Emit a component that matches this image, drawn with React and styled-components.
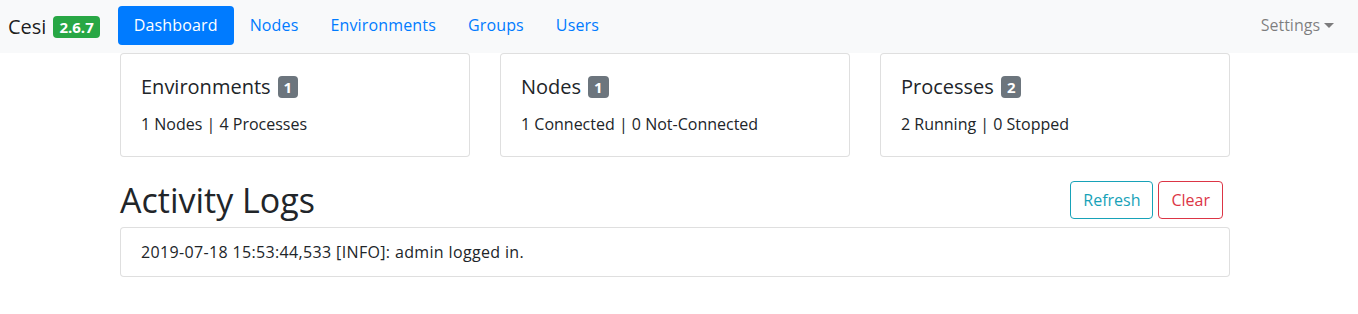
import styled, { createGlobalStyle } from "styled-components";

const GlobalStyle = createGlobalStyle`
  * { box-sizing: border-box; }
  body {
    margin: 0;
    background: #fff;
    color: #212529;
    font-family: "Open Sans", "Noto Sans", sans-serif;
    font-size: 16px;
    line-height: 1.5;
  }
`;

const Navbar = styled.nav`
  display: flex;
  align-items: center;
  height: 53px;
  padding: 0 8px;
  background: #f8f9fa;
`;

const Brand = styled.a`
  display: flex;
  align-items: center;
  font-size: 20px;
  color: rgba(0, 0, 0, 0.9);
  margin-right: 18px;
`;

const Badge = styled.span`
  display: inline-block;
  padding: 0 6px;
  margin-left: 7px;
  font-size: 15px;
  font-weight: 700;
  line-height: 22px;
  color: #fff;
  background: ${(p) => p.bg || "#6c757d"};
  border-radius: 4px;
`;

const NavList = styled.ul`
  display: flex;
  list-style: none;
  margin: 0;
  padding: 0;
  flex: 1;
`;

const NavLink = styled.a`
  display: block;
  padding: 7px 16px 8px;
  border-radius: 4px;
  color: ${(p) => (p.active ? "#fff" : "#007bff")};
  background: ${(p) => (p.active ? "#007bff" : "transparent")};
  text-decoration: none;
  margin-top: -2px;
  letter-spacing: 0.15px;
`;

const Dropdown = styled.a`
  display: flex;
  align-items: center;
  padding: 8px 16px;
  color: rgba(0, 0, 0, 0.5);
  margin-top: -3px;
  &::after {
    content: "";
    margin-left: 4px;
    border-top: 5px solid currentColor;
    border-left: 5px solid transparent;
    border-right: 5px solid transparent;
  }
`;

const Page = styled.div`
  width: 1350px;
`;

const Container = styled.div`
  width: 1140px;
  margin: 0 auto;
  padding: 0 15px;
`;

const CardRow = styled.div`
  display: grid;
  grid-template-columns: repeat(3, 1fr);
  gap: 30px;
`;

const Card = styled.div`
  border: 1px solid rgba(0, 0, 0, 0.125);
  border-radius: 4px;
  background: #fff;
  padding: ${(p) => p.pad || "21px 20px 20px"};
`;

const CardTitle = styled.h5`
  display: flex;
  align-items: center;
  margin: 0 0 13px;
  font-size: 20px;
  font-weight: 500;
  line-height: 1.2;
`;

const CardText = styled.p`
  margin: 0;
  letter-spacing: ${(p) => p.spacing || "0"};
`;

const Header = styled.div`
  display: flex;
  align-items: center;
  justify-content: space-between;
  margin-top: 23px;
  margin-bottom: 6px;
`;

const Title = styled.h2`
  margin: 0;
  font-size: 34px;
  font-weight: 500;
  line-height: 1.2;
`;

const Buttons = styled.div`
  display: flex;
  gap: 5px;
  margin-right: 7px;
`;

const OutlineButton = styled.button`
  font-family: inherit;
  font-size: 16px;
  line-height: 24px;
  padding: 6px 12px;
  background: transparent;
  color: ${(p) => p.color};
  border: 1px solid ${(p) => p.color};
  border-radius: 4px;
`;

export default function App() {
  return (
    <>
      <GlobalStyle />
      <Navbar>
        <Brand>
          Cesi
          <Badge bg="#28a745">2.6.7</Badge>
        </Brand>
        <NavList>
          <li><NavLink active>Dashboard</NavLink></li>
          <li><NavLink>Nodes</NavLink></li>
          <li><NavLink>Environments</NavLink></li>
          <li><NavLink>Groups</NavLink></li>
          <li><NavLink>Users</NavLink></li>
        </NavList>
        <Dropdown>Settings</Dropdown>
      </Navbar>
      <Page>
        <Container>
          <CardRow>
            <Card>
              <CardTitle>Environments<Badge>1</Badge></CardTitle>
              <CardText>1 Nodes | 4 Processes</CardText>
            </Card>
            <Card>
              <CardTitle>Nodes<Badge>1</Badge></CardTitle>
              <CardText>1 Connected | 0 Not-Connected</CardText>
            </Card>
            <Card>
              <CardTitle>Processes<Badge>2</Badge></CardTitle>
              <CardText>2 Running | 0 Stopped</CardText>
            </Card>
          </CardRow>
          <Header>
            <Title>Activity Logs</Title>
            <Buttons>
              <OutlineButton color="#17a2b8">Refresh</OutlineButton>
              <OutlineButton color="#dc3545">Clear</OutlineButton>
            </Buttons>
          </Header>
          <Card pad="12px 20px">
            <CardText spacing="0.35px">2019-07-18 15:53:44,533 [INFO]: admin logged in.</CardText>
          </Card>
        </Container>
      </Page>
    </>
  );
}
